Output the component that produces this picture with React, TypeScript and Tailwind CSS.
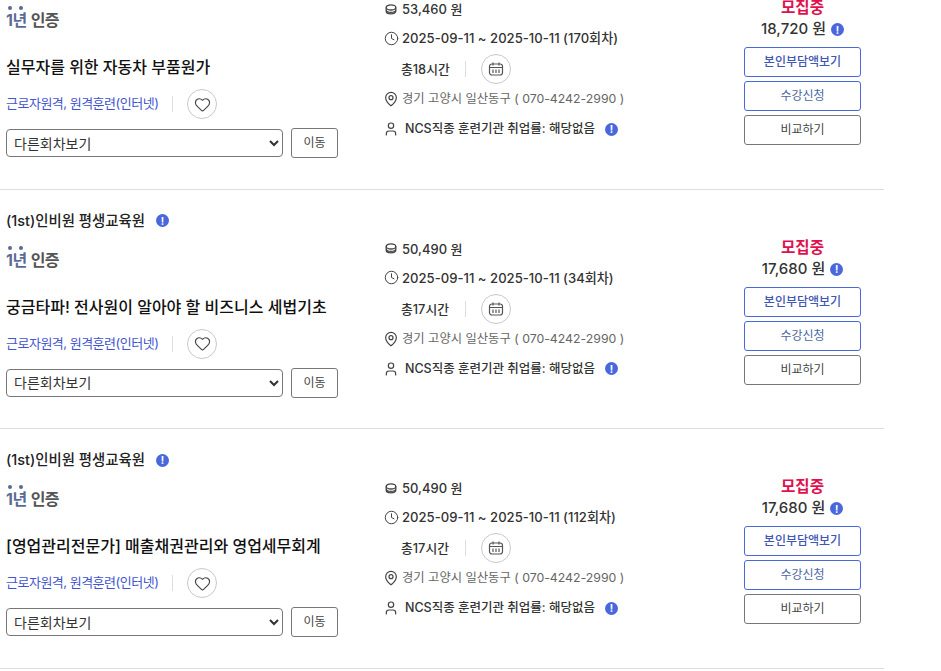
import React from "react";
import { Clock, Heart, MapPin, User } from "lucide-react";

const FONT = "font-['Inter','Noto_Sans_CJK_KR',sans-serif]";

const courses = [
  { title: "실무자를 위한 자동차 부품원가", price: "53,460 원", round: "170회차", hours: "총18시간", self: "18,720 원" },
  { title: "궁금타파! 전사원이 알아야 할 비즈니스 세법기초", price: "50,490 원", round: "34회차", hours: "총17시간", self: "17,680 원" },
  { title: "[영업관리전문가] 매출채권관리와 영업세무회계", price: "50,490 원", round: "112회차", hours: "총17시간", self: "17,680 원" },
];

function Info() {
  return (
    <span className="inline-flex h-[13px] w-[13px] shrink-0 items-center justify-center rounded-full bg-[#4a68dc] text-[10px] leading-none font-bold text-white">
      !
    </span>
  );
}

function CalendarIcon() {
  return (
    <svg width="16" height="16" viewBox="0 0 16 16" fill="none" stroke="#555" strokeWidth="1.2">
      <rect x="1.5" y="3" width="13" height="11" rx="2.5" />
      <path d="M1.5 6.5h13M5 1.5v3M11 1.5v3M5 8.5v3.5M8 8.5v3.5M11 8.5v3.5" />
    </svg>
  );
}

function CoinsIcon() {
  return (
    <svg width="12" height="11" viewBox="0 0 12 11" fill="none" stroke="#444" strokeWidth="1.3">
      <ellipse cx="6" cy="3.4" rx="4.8" ry="2.6" />
      <path d="M1.2 3.4v3.8c0 1.5 2.1 2.6 4.8 2.6s4.8-1.1 4.8-2.6V3.4M1.2 6c0 1.4 2.1 2.4 4.8 2.4S10.800 7.400 10.800 6" />
    </svg>
  );
}

function Card({ c }: { c: (typeof courses)[number] }) {
  return (
    <div className="flex h-[239.5px] w-[884px] border-b border-[#dddddd] pt-5">
      <div className="ml-1.5 flex w-[332px] flex-col pt-px">
        <div className="flex h-5 items-center gap-[11px] text-[14.4px] leading-5 font-medium text-[#222]">
          <span>(1st)인비원 평생교육원</span>
          <Info />
        </div>
        <div className="relative mt-[17px] flex h-6 items-center gap-1 text-[16px] leading-6 font-bold">
          <span className="tracking-[-0.5px] text-[#5a6a96]">1년</span>
          <span className="tracking-[-0.5px] text-[#555]">인증</span>
          <span className="absolute top-[-2px] left-[2px] h-1 w-1 rounded-full bg-[#5a6a96]" />
          <span className="absolute top-[-2px] left-[13px] h-1 w-1 rounded-full bg-[#5a6a96]" />
        </div>
        <div className="mt-[23px] h-6 text-[16px] leading-6 font-medium text-[#111]">{c.title}</div>
        <div className="mt-2.5 flex h-[30px] items-center">
          <span className="text-[13px] tracking-[-0.5px] text-[#3f55cf]">근로자원격, 원격훈련(인터넷)</span>
          <span className="mx-[14px] h-4 w-px bg-[#dddddd]" />
          <span className="flex h-[30px] w-[30px] items-center justify-center rounded-full border border-[#c8c8c8]">
            <Heart size={17} strokeWidth={1.6} color="#444" />
          </span>
        </div>
        <div className="mt-[9px] flex h-[30px] items-center justify-between">
          <select className="h-7 w-[277px] rounded-[4px] border border-[#777] bg-white pl-[3px] text-[14px] text-[#333]">
            <option>다른회차보기</option>
          </select>
          <button className="h-[30px] w-[47px] rounded-[3px] border border-[#777] bg-white text-[12px] text-[#444]">
            이동
          </button>
        </div>
      </div>

      <div className="ml-[45px] flex w-[342px] -translate-y-px flex-col">
        <div className="mt-[30px] flex h-5 items-center text-[13px] leading-5 font-medium text-[#333]">
          <span className="flex w-4 justify-center"><CoinsIcon /></span>
          <span className="ml-[3px]">{c.price}</span>
        </div>
        <div className="mt-[9px] flex h-5 items-center text-[13.1px] leading-5 font-medium text-[#333]">
          <span className="flex w-4 justify-center"><Clock size={15} strokeWidth={1.6} color="#444" /></span>
          <span className="ml-[3px]">2025-09-11 ~ 2025-10-11 ({c.round})</span>
        </div>
        <div className="mt-1.5 ml-[18px] flex h-[30px] items-center text-[12.8px] font-medium text-[#333]">
          <span className="w-12 pt-0.5 whitespace-nowrap">{c.hours}</span>
          <span className="mr-[15px] ml-[16px] h-4 w-px bg-[#dddddd]" />
          <span className="flex h-[30px] w-[30px] items-center justify-center rounded-full border border-[#c8c8c8]">
            <CalendarIcon />
          </span>
        </div>
        <div className="mt-[5px] flex h-5 items-center text-[12.3px] leading-5 text-[#666]">
          <span className="flex w-4 justify-center"><MapPin size={16} strokeWidth={1.8} color="#444" /></span>
          <span className="ml-[3px]">경기 고양시 일산동구 ( 070-4242-2990 )</span>
        </div>
        <div className="mt-2.5 flex h-5 items-center text-[12.5px] leading-5 font-medium text-[#333]">
          <span className="flex w-4 justify-center"><User size={16} strokeWidth={1.8} color="#444" /></span>
          <span className="ml-1.5">NCS직종 훈련기관 취업률: 해당없음</span>
          <span className="ml-2.5 flex">
            <Info />
          </span>
        </div>
      </div>

      <div className="ml-[19px] flex w-[117px] flex-col items-center">
        <div className="mt-[27px] h-[22px] text-[15.6px] leading-[22px] font-bold text-[#e0104f]">모집중</div>
        <div className="flex h-[21px] items-center gap-[5px] text-[15px] font-medium text-[#333]">
          <span>{c.self}</span>
          <Info />
        </div>
        <button className="mt-[7px] h-[30px] w-full rounded-[3px] border border-[#4a68dc] bg-white text-[12px] font-medium text-[#3f55b8]">
          본인부담액보기
        </button>
        <button className="mt-1 h-[30px] w-full rounded-[3px] border border-[#4a68dc] bg-white text-[12px] text-[#4a68a8]">
          수강신청
        </button>
        <button className="mt-1 h-[30px] w-full rounded-[3px] border border-[#777] bg-white text-[12px] text-[#444]">
          비교하기
        </button>
      </div>
    </div>
  );
}

export default function App() {
  return (
    <div className={`h-[671px] w-[941px] overflow-hidden bg-white ${FONT}`}>
      <div className="-mt-[50px]">
        {courses.map((c) => (
          <Card key={c.title} c={c} />
        ))}
      </div>
    </div>
  );
}
